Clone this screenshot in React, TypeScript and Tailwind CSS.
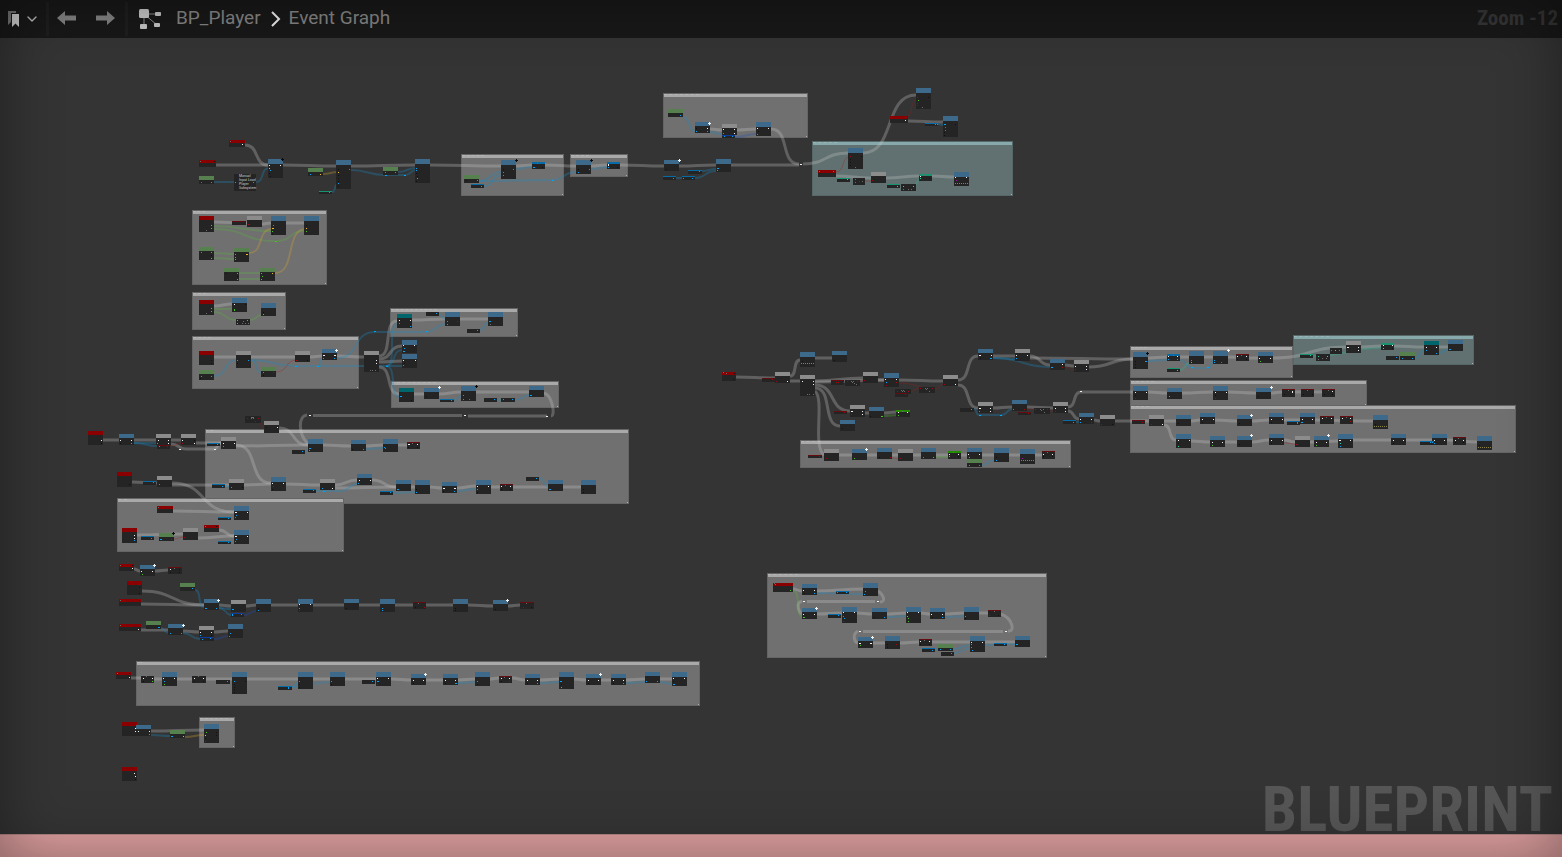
import { LuChevronDown } from "react-icons/lu";

type Kind = "b" | "r" | "g" | "n" | "t" | "c" | "d" | "s" | "m" | "l" | "k";
type NodeRow = [Kind, number, number, number, number, string?];
type WireRow = [string, number, number, number, number];
type BoxRow = [number, number, number, number, "grey" | "teal", number?];

/* Title colour of every node kind; compact kinds only carry a thin stripe. */
const TITLE: Record<Kind, string> = {
  b: "bg-[#3d698a] -right-px",
  r: "bg-[#8a0000]",
  g: "bg-[#8c8c8c]",
  n: "bg-[#57804f]",
  t: "bg-[#00666b]",
  c: "bg-[#076ca6]",
  d: "bg-[#650c10]",
  s: "bg-[#17946f]",
  m: "bg-[#0c3c9c]",
  l: "bg-[#248c00]",
  k: "bg-[#242424]",
};

const PIN: Record<string, string> = {
  w: "bg-[#f2f2f2]",
  c: "bg-[#00a6f5]",
  k: "bg-[#101010]",
  r: "bg-[#a00a0a]",
  y: "bg-[#f5bd22]",
  l: "bg-[#46c81e]",
  s: "bg-[#1fd8a8]",
  p: "bg-[#a31aa8]",
  o: "bg-[#6c6c6c]",
};

const WIRE: Record<string, [string, number]> = {
  w: ["rgba(200,200,200,0.3)", 3],
  c: ["rgba(22,140,200,0.3)", 2],
  l: ["rgba(90,180,60,0.3)", 2],
  y: ["rgba(215,165,50,0.3)", 2],
  r: ["rgba(170,25,25,0.32)", 1],
  m: ["rgba(30,80,190,0.3)", 2],
  s: ["rgba(40,190,150,0.28)", 2],
};

const BOXES: BoxRow[] = [
  [663, 93, 145, 45, "grey", 35],
  [812, 141, 201, 55, "teal", 24],
  [461, 154, 103, 42, "grey", 22],
  [570, 154, 58, 23, "grey", 18],
  [192, 210, 135, 75, "grey", 12],
  [192, 292, 94, 38, "grey", 13],
  [192, 336, 167, 53, "grey", 18],
  [390, 308, 128, 29, "grey", 46],
  [391, 381, 168, 27, "grey", 44],
  [205, 429, 424, 75, "grey", 7],
  [117, 498, 227, 54, "grey", 9],
  [136, 661, 564, 45, "grey", 5],
  [199, 717, 36, 31, "grey", 28],
  [767, 573, 280, 85, "grey", 30],
  [800, 440, 271, 28, "grey", 20],
  [1130, 346, 163, 32, "grey", 16],
  [1293, 335, 181, 30, "teal", 35],
  [1130, 380, 237, 26, "grey", 23],
  [1130, 405, 386, 48, "grey", 18],
];

const NODES: NodeRow[] = [
  // Startup chain
  ["r", 229, 140, 16, 7, "w13,4 o1,1"],
  ["r", 199, 160, 17, 7, "o1,1 k15,1"],
  ["n", 199, 176, 15, 8, "o2,6 c12,6"],
  ["k", 234, 174, 22, 17, "c1,8 c19,8"],
  ["b", 268, 159, 15, 19, "w1,6 w12,6 y1,9 c2,11 k1,14 k2,17"],
  ["n", 308, 168, 15, 8, "c2,6 y12,6"],
  ["b", 336, 160, 15, 29, "c13,9 k2,9 y2,12 k2,15 k2,18 k2,21 c2,23 k2,26"],
  ["s", 319, 191, 13, 3, "c10,1"],
  ["n", 383, 167, 15, 8, "c2,5 c12,5"],
  ["b", 415, 159, 15, 24, "c1,9 c1,11 k1,14 k2,17 l2,19 k1,22"],
  ["n", 464, 175, 15, 8, "k2,5 c13,5"],
  ["c", 471, 184, 13, 4, "c10,2"],
  ["b", 501, 160, 15, 19, "k2,9 c12,9 c2,12 c2,15"],
  ["c", 532, 162, 13, 7, "o5,1 c1,5 c2,5 k10,5"],
  ["b", 576, 160, 15, 14, "k2,9 c13,9 c2,12"],
  ["c", 607, 162, 13, 7, "w1,2 w1,3 c1,5 k10,5"],
  ["b", 664, 160, 15, 11, "k2,9"],
  ["c", 688, 170, 14, 4, "c11,1"],
  ["c", 663, 176, 13, 4, "c10,2"],
  ["c", 682, 176, 13, 4, "c1,2 c10,2"],
  ["b", 716, 159, 15, 13, "c1,9 c2,9 c1,11"],
  ["n", 668, 109, 15, 8, "c12,6"],
  ["b", 695, 122, 15, 11, "k1,6 w12,6 c1,9 c12,9"],
  ["g", 722, 124, 15, 11, "w1,5 w12,5 c1,9 w12,9"],
  ["m", 722, 135, 13, 3, "c2,1 c10,1"],
  ["b", 756, 122, 15, 14, "w1,6 w12,6 k2,9 c1,12"],
  ["b", 848, 148, 15, 21, "r2,8 k13,8 k2,11 k2,14 k2,17 o7,19"],
  ["r", 818, 170, 18, 7, "o1,1 o15,1"],
  ["s", 837, 178, 13, 4, "s10,1"],
  ["k", 853, 178, 12, 7, "o2,1 o2,4 r6,3 o9,3"],
  ["g", 871, 172, 15, 11, "r1,8"],
  ["s", 887, 184, 13, 4, "s10,2"],
  ["k", 901, 184, 15, 7, "s2,2 o7,5 s12,2 o10,5 o2,5"],
  ["s", 919, 174, 13, 7, "o5,1 w1,2 s1,4 k10,4"],
  ["b", 954, 172, 15, 14, "w1,5 w12,5 p2,8 z1,11"],
  ["b", 916, 88, 15, 21, "r1,9 k12,9 l2,12 r1,15 r1,17 o6,19"],
  ["r", 890, 116, 18, 7, "r1,1 r15,1 w15,4"],
  ["b", 943, 116, 15, 21, "c1,8 c2,8 k12,8 o2,11 o2,14 k1,16 k1,19"],
  ["c", 925, 123, 13, 3, "c10,1 c12,1"],

  // Axis input
  ["r", 199, 216, 15, 16, "l12,9 l12,12 o7,14"],
  ["d", 232, 221, 14, 4],
  ["g", 247, 216, 15, 11, "r1,8 r2,8"],
  ["b", 271, 216, 15, 19, "c2,9 y1,12 y2,12 l1,15 k1,18"],
  ["b", 304, 216, 15, 19, "k2,9 y2,12 l2,15"],
  ["n", 199, 247, 15, 13, "c2,5 l12,5 k12,8 l12,11"],
  ["n", 234, 248, 15, 14, "l1,6 y12,6 y13,6 l1,9 l1,11"],
  ["n", 224, 268, 15, 13, "k2,5 l13,5 k13,8 l13,11"],
  ["n", 260, 268, 15, 13, "l1,5 y12,5 l2,8 l1,11"],
  ["r", 199, 300, 15, 15, "l12,8 l12,11 o7,13"],
  ["b", 232, 298, 15, 14, "w2,6 k13,6 l2,11 l2,12"],
  ["b", 261, 303, 15, 13, "k2,9 l2,11"],
  ["k", 236, 319, 14, 6, "l1,1 l11,1 o6,4 o9,4 l1,4 o7,2 o12,4"],

  // Dispatch and its branches
  ["r", 199, 351, 15, 14, "k12,9 k12,12"],
  ["n", 199, 370, 15, 10, "c2,6 c12,6 k1,8"],
  ["g", 236, 351, 15, 17, "c1,9 c12,9 k1,12"],
  ["n", 261, 367, 15, 10, "c2,5 r12,5 k2,8"],
  ["g", 295, 351, 15, 11, "r1,9 r2,9 k12,9"],
  ["b", 322, 349, 15, 11, "w1,6 w2,6 w12,6 w13,6 c1,9 c12,9"],
  ["g", 364, 351, 15, 21, "w12,9 w12,12 o6,19 o8,19 o11,19"],
  ["t", 397, 314, 15, 14, "w2,6 w13,6 c2,9 c13,12"],
  ["k", 426, 312, 13, 3, "c10,1"],
  ["b", 445, 312, 15, 14, "c2,9 c2,12 r12,9"],
  ["k", 467, 329, 13, 3, "c10,1"],
  ["b", 488, 312, 15, 14, "c1,9 c2,9 o2,12"],
  ["b", 402, 340, 15, 13, "w1,5 w12,5 c2,8 c1,11 c2,11"],
  ["b", 402, 354, 15, 14, "w1,6 w13,6 k2,9 c1,11"],
  ["t", 399, 388, 15, 14, "c1,8 c2,8 k12,12"],
  ["b", 424, 388, 15, 11, "k2,8"],
  ["c", 440, 399, 14, 3, "c11,1"],
  ["b", 461, 386, 15, 15, "c2,9 c2,13 o8,13"],
  ["k", 484, 398, 13, 3, "c10,1"],
  ["k", 501, 398, 14, 3, "c2,1 c11,1"],
  ["b", 529, 386, 15, 11, "c1,9 c2,9"],

  // Movement section
  ["k", 245, 416, 16, 7, "r2,2 r13,2 o6,1 o7,1 o8,1 o6,2 o8,2 r10,5"],
  ["g", 264, 421, 15, 12, "k2,6 w13,6"],
  ["r", 88, 431, 15, 14, "w13,9 k13,12"],
  ["b", 119, 434, 15, 11, "w1,6 w12,6 k1,9 c12,9"],
  ["d", 157, 445, 13, 4, "c2,1 r10,1"],
  ["g", 156, 434, 15, 11, "w2,6 w12,6 c1,9 w12,9"],
  ["g", 181, 434, 15, 11, "w1,6 k13,6 w13,9 r1,9"],
  ["c", 207, 443, 13, 3, "c10,1"],
  ["g", 221, 437, 15, 12, "w2,6 w13,6 c2,9"],
  ["k", 292, 450, 13, 3, "c10,1"],
  ["b", 308, 439, 15, 13, "c1,9 c2,9 c1,11"],
  ["b", 351, 440, 15, 11, "k1,9 c12,9"],
  ["b", 383, 439, 15, 13, "c1,8 c2,9"],
  ["d", 407, 442, 13, 7, "w1,2 w2,2 w10,2 o5,1 k1,5 k10,5"],
  ["r", 117, 472, 15, 15, "k12,12"],
  ["c", 143, 481, 13, 4, "c10,1"],
  ["g", 157, 476, 15, 11, "c2,8"],
  ["c", 212, 484, 13, 4, "c10,2"],
  ["g", 229, 479, 15, 11, "c2,8 k13,8"],
  ["b", 271, 477, 15, 14, "w1,6 w12,6 r2,9 k1,12"],
  ["c", 303, 489, 13, 4, "c10,1"],
  ["g", 320, 479, 15, 11, "c2,9 w12,9"],
  ["b", 357, 474, 15, 11, "w2,6 w13,6 c1,9"],
  ["c", 380, 491, 13, 4, "c10,1"],
  ["b", 396, 480, 15, 11, "c1,9 c2,9"],
  ["b", 415, 480, 15, 14, "k1,9 c1,12"],
  ["b", 442, 482, 15, 11, "w1,6 w2,6 w12,6 w13,6 k1,9 c12,9"],
  ["b", 476, 480, 15, 14, "w1,6 w12,6 c1,9 k1,12"],
  ["d", 500, 484, 13, 7, "o5,1 w1,2 w10,2 k1,5 k10,5"],
  ["k", 526, 477, 13, 3, "c10,1"],
  ["b", 548, 480, 15, 11, "c1,9 c2,9"],
  ["b", 581, 480, 15, 14, "k2,9 k2,12"],
  ["r", 157, 506, 16, 7, "o1,1 k14,1"],
  ["b", 234, 506, 15, 14, "w1,6 w2,6 w13,6 c2,9 c1,11"],
  ["c", 218, 517, 13, 3, "c10,1"],
  ["r", 122, 528, 15, 15, "w12,7 w12,10 c12,12"],
  ["c", 141, 536, 13, 4, "c10,2"],
  ["n", 159, 533, 15, 8, "c1,6 c2,6 r12,6"],
  ["g", 183, 528, 15, 12, "r1,9"],
  ["r", 204, 525, 15, 7, "o1,1 k12,1"],
  ["b", 234, 530, 15, 14, "w1,6 w2,6 w13,6 c2,9 c1,11"],
  ["c", 218, 541, 13, 3, "c10,1"],

  // Short chains
  ["r", 119, 564, 15, 7, "o1,1 k13,1 w13,4"],
  ["b", 140, 565, 15, 11, "w1,6 w12,6 l2,9"],
  ["d", 168, 567, 14, 7, "o6,1 w2,2 k11,2 k2,5 k11,5"],
  ["r", 127, 581, 15, 14, "k12,6 k12,12"],
  ["r", 119, 599, 22, 7, "o1,1 k20,1"],
  ["n", 180, 583, 15, 8, "c12,5"],
  ["b", 204, 599, 15, 11, "c1,9 c2,9 c12,9"],
  ["g", 231, 600, 15, 12, "c1,9 c2,9"],
  ["m", 231, 613, 13, 4, "c1,1 c1,2 m10,1"],
  ["b", 256, 599, 15, 13, "k2,9 c2,11"],
  ["b", 298, 599, 15, 13, "w1,5 w12,5 c1,9 r1,11"],
  ["b", 344, 599, 15, 11, "k2,9"],
  ["b", 380, 599, 15, 13, "c2,9 c2,11"],
  ["d", 413, 602, 13, 7, "o5,1 k2,5 r11,5"],
  ["b", 453, 599, 15, 13, "k2,9 k2,11"],
  ["b", 493, 600, 15, 11, "k2,9"],
  ["d", 520, 602, 14, 7, "o6,1 r3,5 k11,5"],
  ["r", 119, 624, 22, 7, "o1,1 w19,5"],
  ["n", 146, 621, 15, 8, "c12,6 c13,6"],
  ["b", 168, 624, 15, 11, "c2,9 c13,9"],
  ["m", 200, 637, 14, 4, "c2,2 c10,1"],
  ["g", 199, 626, 15, 11, "w1,6 w12,6 c1,9 k12,9"],
  ["b", 228, 624, 15, 14, "c2,9 c1,12"],

  // Initialisation strip
  ["r", 116, 672, 15, 7, "o1,1 k13,1 w13,5"],
  ["k", 141, 676, 13, 7, "o5,0 w2,2 w11,2 k2,5 l11,5"],
  ["b", 162, 672, 15, 14, "w1,6 w12,6 c2,9 l2,12"],
  ["k", 192, 676, 14, 7, "o6,0 w2,2 w11,2 k2,5 k11,5"],
  ["k", 216, 680, 14, 3, "c11,1"],
  ["b", 232, 672, 15, 22, "c2,9 k13,9 k2,12 k2,15 k2,17 k2,20"],
  ["c", 278, 686, 14, 4, "c10,1 c10,2"],
  ["b", 298, 672, 15, 17, "c1,9 k1,12 k1,15"],
  ["b", 330, 672, 15, 14, "c1,9 k1,12"],
  ["k", 362, 680, 13, 3, "c10,1"],
  ["b", 376, 672, 15, 14, "w1,6 w12,6 c1,9 c2,9 r1,12"],
  ["b", 411, 674, 15, 11, "w2,6 w12,6 k2,9"],
  ["b", 443, 674, 15, 11, "w2,6 w12,6 k2,9 c12,9 c13,9"],
  ["b", 475, 672, 15, 14, "c2,9 k2,12"],
  ["d", 499, 676, 13, 7, "o5,1 w2,2 w10,2 k2,5 r10,5"],
  ["b", 525, 674, 15, 11, "w2,6 w12,6 k2,9 c12,9"],
  ["b", 559, 672, 15, 17, "c1,9 c2,9 k2,12 l2,15"],
  ["b", 586, 674, 15, 11, "w2,6 w12,6 k2,9"],
  ["b", 611, 674, 15, 11, "w2,6 w12,6 k2,9 c12,9"],
  ["b", 645, 672, 15, 11, "c1,9 c12,9"],
  ["b", 672, 672, 15, 14, "w1,6 w12,6 k1,9 c1,12 c2,12"],
  ["r", 122, 722, 15, 14, "w13,6 w13,9"],
  ["b", 136, 725, 15, 11, "w2,6 w13,6 c13,9"],
  ["n", 170, 730, 15, 8, "c1,6 c2,6 y13,6"],
  ["b", 204, 724, 15, 19, "l2,8 y1,11 k12,8 k12,11 k1,14 r1,17"],
  ["r", 122, 767, 15, 14, "w12,6 w13,9 k13,12"],

  // Damage branches
  ["r", 722, 372, 14, 9, "o1,0 o4,1 k12,1 k11,7"],
  ["d", 762, 378, 13, 4, "r10,1"],
  ["g", 775, 372, 15, 11, "r1,9 w12,9"],
  ["b", 800, 352, 15, 15, "k2,9 z1,11"],
  ["b", 832, 351, 15, 11, "k2,9"],
  ["g", 800, 375, 15, 21, "w2,6 w13,6 w13,9 o7,19 o9,19 o13,19"],
  ["d", 831, 380, 13, 5, "r5,2 r7,2 r12,2"],
  ["k", 845, 380, 15, 6, "r2,1 r12,1 o6,1 o7,2 o8,1 o9,3 o11,4"],
  ["g", 863, 372, 15, 11, "r1,8"],
  ["b", 884, 373, 15, 14, "w1,6 w12,6 c2,9 r12,9 r2,12"],
  ["k", 895, 389, 16, 5, "r2,2 r13,2 o6,1 o7,2 o8,1 o9,2"],
  ["d", 895, 393, 13, 4, "r10,1"],
  ["k", 919, 387, 16, 6, "r1,1 r13,1 o6,1 o7,2 o8,1 o10,4"],
  ["g", 943, 375, 15, 11, "r1,9 w12,9"],
  ["b", 978, 349, 15, 11, "w1,6 w2,6 w13,6 k2,9 c12,9 c13,9"],
  ["g", 1015, 349, 15, 12, "w1,6 w12,6 c1,9"],
  ["b", 1050, 359, 15, 11, "w12,5 c1,8 c2,8 r12,8"],
  ["g", 1074, 360, 15, 12, "w1,6 w12,6 r1,9 w12,9"],
  ["d", 834, 411, 13, 3, "r10,1"],
  ["g", 850, 405, 15, 12, "w1,6 w2,6 w12,6 r1,9 w12,9"],
  ["b", 869, 407, 15, 11, "k1,9 l12,9 l13,9"],
  ["l", 896, 410, 14, 7, "o6,1 w2,2 w11,2 l2,5"],
  ["b", 840, 420, 15, 11, "k2,8"],
  ["k", 960, 408, 14, 3, "c11,1"],
  ["g", 978, 402, 15, 11, "w1,6 w2,6 w12,6 c1,9 w12,9"],
  ["b", 1012, 400, 15, 11, "c1,9 r12,9"],
  ["d", 1018, 412, 13, 3, "r10,1"],
  ["k", 1034, 408, 16, 6, "r1,1 r13,1 o6,1 o7,2 o9,1 o10,4"],
  ["g", 1053, 402, 15, 11, "w2,6 w12,6 r2,9 w12,9"],
  ["c", 1063, 420, 13, 4, "c10,2"],
  ["b", 1079, 413, 15, 11, "w1,6 w12,6 c1,9 r12,9"],
  ["g", 1100, 415, 15, 11, "r1,9 k12,9"],
  ["d", 808, 455, 14, 3, "r11,1"],
  ["g", 824, 449, 15, 12, "r2,9"],
  ["b", 852, 449, 15, 11, "l2,9"],
  ["b", 877, 448, 15, 11, "k2,9 r13,9"],
  ["g", 898, 449, 15, 12, "r2,9"],
  ["b", 921, 448, 15, 11, "c2,9 l12,9"],
  ["l", 948, 451, 13, 8, "o5,1 w1,3 w10,3 l1,5 k10,5"],
  ["b", 967, 448, 15, 11, "w1,6 w12,6 c2,9"],
  ["n", 967, 459, 15, 8, "c2,6 c12,6"],
  ["b", 994, 448, 15, 14, "k2,9 c2,12"],
  ["b", 1020, 449, 15, 15, "p2,9 z1,11"],
  ["d", 1042, 451, 13, 8, "o5,1 w1,3 w10,3 k1,5 k10,5"],

  // Combat lanes
  ["b", 1133, 352, 15, 17, "k2,9 c12,9 c13,9 k2,12 k2,15"],
  ["c", 1167, 354, 13, 7, "o6,1 w1,2 w10,2 c1,5 c10,5"],
  ["s", 1167, 368, 13, 4, "s10,2"],
  ["b", 1189, 351, 15, 13, "c2,9 s2,11"],
  ["b", 1213, 351, 15, 13, "c1,9 c1,11 o8,11"],
  ["d", 1236, 354, 13, 7, "o5,1 w1,2 w10,2 k1,5 k10,5"],
  ["b", 1258, 352, 15, 11, "w1,6 w12,6 l2,9"],
  ["s", 1300, 354, 13, 4, "s10,1"],
  ["k", 1316, 354, 14, 7, "s2,2 o6,4 s11,2 o10,4 o2,5"],
  ["k", 1330, 348, 12, 6, "o1,2 s5,2 o9,2"],
  ["g", 1346, 341, 15, 12, "w1,6 w2,6 w12,6 r1,9 w12,9"],
  ["s", 1381, 343, 13, 7, "o6,1 w2,2 w11,2 s2,5 k11,5"],
  ["k", 1386, 356, 13, 3, "c10,1"],
  ["n", 1400, 352, 15, 8, "c2,6 c12,6"],
  ["t", 1424, 341, 15, 14, "w2,6 w12,6 c2,9 c12,12"],
  ["b", 1448, 340, 15, 11, "c1,9 c2,9"],
  ["b", 1133, 386, 15, 14, "w2,6 w13,6 k2,9 r2,12"],
  ["b", 1167, 388, 15, 11, "l2,8"],
  ["b", 1213, 386, 15, 14, "w2,6 w13,6 k2,9 r2,12"],
  ["b", 1256, 388, 15, 11, "k2,8"],
  ["d", 1282, 389, 13, 8, "o6,1 w10,2 k2,5 w10,3"],
  ["d", 1301, 389, 13, 8, "o6,1 k2,5 k11,5"],
  ["d", 1322, 389, 13, 8, "o6,1 w10,2 k2,5 k10,5"],
  ["d", 1132, 420, 13, 4, "r10,2"],
  ["g", 1149, 415, 15, 11, "r2,9 w13,9"],
  ["b", 1176, 415, 15, 11, "k2,8"],
  ["b", 1200, 413, 15, 11, "w2,6 w13,6 k2,9"],
  ["b", 1237, 415, 15, 11, "k2,8"],
  ["b", 1269, 413, 15, 11, "w2,6 w13,6 k2,9"],
  ["b", 1300, 413, 15, 11, "w2,6 w12,6 c1,9 c2,9"],
  ["c", 1287, 421, 13, 4, "c10,1 c10,2"],
  ["d", 1320, 416, 14, 8, "o6,1 w2,2 w11,2 r11,5"],
  ["d", 1340, 416, 13, 8, "o6,1 w2,2 w10,2 r10,5"],
  ["b", 1373, 415, 15, 14, "k2,9 z1,11"],
  ["b", 1176, 434, 15, 14, "w2,6 w13,6 k2,9 s2,12"],
  ["b", 1210, 436, 15, 11, "w2,6 w12,6 l2,9"],
  ["b", 1237, 436, 15, 11, "k2,8"],
  ["b", 1269, 434, 15, 11, "w2,6 w13,6 k2,9 r12,9"],
  ["g", 1295, 436, 15, 11, "r1,8 r2,8"],
  ["b", 1314, 436, 15, 11, "w2,6 w12,6 l2,9"],
  ["b", 1338, 434, 15, 14, "w1,6 w2,6 w12,6 s2,9 c2,12"],
  ["b", 1391, 434, 15, 11, "w2,6 w12,6 k2,9"],
  ["b", 1432, 434, 15, 11, "w2,6 w12,6 c2,9"],
  ["c", 1420, 441, 14, 4, "c10,1 c12,1"],
  ["d", 1453, 437, 13, 8, "o5,1 w2,3 w10,3 k2,5 k10,5"],
  ["b", 1477, 436, 15, 14, "k2,9 z1,11"],

  // Respawn section
  ["r", 773, 583, 20, 9, "o1,0 o2,1 k18,1 l17,7"],
  ["b", 802, 584, 15, 11, "w1,6 w12,6 k2,9 c12,9"],
  ["c", 836, 591, 13, 3, "c1,1 c10,1"],
  ["b", 863, 583, 15, 13, "c2,8 c1,11"],
  ["b", 802, 608, 15, 11, "w1,6 w12,6 l1,9 l2,9"],
  ["c", 828, 614, 13, 4, "c10,1"],
  ["b", 842, 607, 15, 16, "w1,5 w12,5 c1,9 c2,11 r1,14"],
  ["b", 872, 608, 15, 11, "k2,9 c12,9"],
  ["b", 906, 607, 15, 16, "w1,5 w12,5 s1,9 l2,11 l2,14"],
  ["b", 930, 608, 15, 11, "w1,6 w12,6 k2,9 c12,9"],
  ["b", 964, 607, 15, 13, "c1,9 k1,11"],
  ["d", 988, 610, 13, 7, "o6,1 r1,5 k10,5"],
  ["b", 858, 637, 15, 11, "w1,6 w2,6 w12,6 w13,6 l2,8"],
  ["b", 885, 636, 15, 13, "k2,8 r11,8 k2,11"],
  ["d", 919, 639, 13, 7, "o5,1 w1,2 w10,2 k1,5 k10,5"],
  ["c", 922, 648, 13, 4, "c10,2"],
  ["n", 938, 644, 15, 7, "c2,5 c12,5"],
  ["k", 941, 652, 13, 3, "c10,1"],
  ["b", 970, 636, 15, 16, "w1,6 w12,6 c1,8 c1,11 c2,14"],
  ["c", 994, 643, 13, 3, "c10,1"],
  ["b", 1015, 636, 15, 11, "c1,8 c2,8"],
];

const WIRES: WireRow[] = [
  ["w", 245, 145, 268, 165], ["w", 216, 165, 268, 165], ["w", 283, 165, 336, 166],
  ["w", 351, 166, 415, 165], ["w", 430, 165, 501, 166], ["w", 516, 166, 532, 165],
  ["w", 545, 165, 576, 166], ["w", 591, 166, 607, 165], ["w", 620, 165, 664, 166],
  ["w", 679, 166, 716, 165], ["w", 731, 165, 799, 165], ["w", 771, 129, 799, 164],
  ["w", 803, 164, 848, 153], ["w", 863, 153, 916, 95], ["w", 908, 121, 943, 122],
  ["w", 836, 176, 871, 178], ["w", 886, 178, 919, 176], ["w", 932, 176, 954, 177],
  ["w", 710, 129, 722, 130], ["w", 737, 130, 756, 129], ["r", 905, 118, 918, 99],
  ["r", 836, 172, 850, 157], ["r", 865, 181, 871, 181], ["s", 913, 186, 921, 179],
  ["c", 683, 117, 695, 131], ["c", 710, 132, 722, 134], ["m", 735, 137, 757, 134],
  ["c", 676, 178, 682, 178], ["c", 695, 178, 716, 171], ["c", 702, 171, 716, 169],
  ["c", 591, 169, 607, 167], ["c", 938, 124, 943, 125], ["c", 214, 182, 234, 182],
  ["c", 256, 182, 269, 168], ["y", 323, 174, 338, 172], ["c", 332, 192, 338, 184],
  ["c", 351, 170, 385, 175], ["c", 385, 175, 405, 175], ["c", 398, 172, 416, 168],
  ["c", 405, 175, 416, 170], ["c", 479, 181, 502, 172], ["c", 479, 181, 552, 180],
  ["c", 484, 186, 502, 175], ["c", 552, 180, 576, 172], ["c", 514, 169, 532, 167],
  ["w", 214, 222, 247, 223], ["w", 262, 224, 271, 223], ["w", 286, 223, 304, 223],
  ["l", 214, 226, 271, 231], ["l", 214, 229, 275, 241], ["l", 277, 241, 304, 231],
  ["y", 249, 253, 272, 229], ["y", 275, 273, 306, 229], ["l", 214, 253, 235, 254],
  ["l", 214, 258, 235, 259], ["l", 239, 273, 260, 273], ["l", 239, 279, 260, 279],
  ["w", 214, 306, 232, 304], ["l", 214, 309, 232, 309], ["l", 214, 312, 236, 320],
  ["l", 250, 320, 262, 315],
  ["w", 214, 357, 236, 357], ["w", 251, 357, 295, 357], ["w", 310, 357, 322, 356],
  ["w", 337, 356, 364, 357], ["w", 379, 356, 397, 321], ["w", 379, 359, 402, 346],
  ["w", 379, 362, 402, 361], ["w", 379, 367, 399, 394], ["w", 412, 320, 445, 319],
  ["w", 460, 319, 488, 319], ["w", 414, 394, 424, 394], ["w", 439, 394, 461, 392],
  ["w", 476, 392, 529, 392], ["c", 214, 376, 237, 360], ["c", 251, 360, 262, 373],
  ["c", 251, 360, 295, 366], ["c", 295, 366, 386, 366], ["c", 318, 366, 323, 358],
  ["c", 337, 358, 375, 332], ["c", 375, 332, 426, 332], ["c", 426, 332, 446, 324],
  ["r", 276, 372, 297, 360], ["c", 386, 366, 402, 350], ["c", 386, 366, 402, 366],
  ["c", 386, 366, 398, 324], ["c", 386, 366, 400, 397], ["c", 438, 314, 446, 319],
  ["c", 480, 330, 489, 322], ["c", 454, 400, 462, 396], ["c", 497, 400, 501, 400],
  ["c", 515, 400, 530, 395],
  ["w", 103, 440, 119, 440], ["w", 134, 440, 156, 440], ["w", 171, 440, 181, 440],
  ["w", 196, 443, 221, 443], ["w", 171, 444, 186, 449], ["w", 186, 449, 214, 449],
  ["w", 214, 449, 221, 443], ["w", 236, 446, 308, 445], ["w", 236, 445, 271, 483],
  ["w", 279, 428, 308, 445], ["w", 323, 445, 351, 446], ["w", 366, 446, 383, 445],
  ["w", 398, 445, 407, 445], ["w", 132, 482, 157, 483], ["w", 172, 483, 234, 512],
  ["w", 172, 485, 229, 485], ["w", 244, 485, 271, 484], ["w", 286, 484, 320, 485],
  ["w", 335, 485, 357, 480], ["w", 372, 480, 396, 487], ["w", 335, 488, 396, 487],
  ["w", 411, 487, 415, 487], ["w", 430, 487, 442, 488], ["w", 457, 488, 476, 486],
  ["w", 491, 487, 500, 487], ["w", 513, 487, 548, 487], ["w", 563, 487, 581, 487],
  ["w", 172, 511, 234, 512], ["w", 137, 535, 183, 534], ["w", 198, 538, 234, 536],
  ["w", 219, 530, 234, 536], ["c", 134, 443, 157, 446], ["c", 134, 443, 156, 443],
  ["r", 171, 446, 182, 443], ["r", 256, 419, 265, 428], ["c", 366, 449, 383, 448],
  ["c", 225, 486, 230, 487], ["c", 316, 491, 341, 491], ["c", 341, 491, 357, 484],
  ["c", 393, 493, 415, 492], ["c", 457, 491, 476, 489], ["c", 539, 478, 549, 487],
  ["c", 305, 451, 309, 450], ["r", 174, 539, 184, 537],
  ["w", 134, 569, 140, 571], ["w", 155, 571, 168, 570], ["w", 142, 591, 204, 605],
  ["w", 141, 604, 204, 605], ["w", 219, 605, 231, 606], ["w", 246, 606, 256, 605],
  ["w", 271, 605, 298, 605], ["w", 313, 605, 344, 605], ["w", 359, 605, 380, 605],
  ["w", 395, 605, 413, 605], ["w", 426, 605, 453, 605], ["w", 468, 605, 493, 606],
  ["w", 508, 606, 520, 605], ["w", 141, 630, 168, 630], ["w", 183, 631, 199, 632],
  ["w", 214, 632, 228, 631], ["c", 195, 590, 204, 607], ["c", 219, 608, 232, 615],
  ["c", 219, 608, 231, 609], ["m", 244, 615, 257, 611], ["c", 160, 628, 169, 633],
  ["c", 183, 633, 200, 639], ["m", 214, 639, 229, 636],
  ["w", 131, 678, 141, 678], ["w", 154, 679, 162, 679], ["w", 177, 679, 192, 679],
  ["w", 206, 679, 232, 679], ["w", 247, 679, 298, 679], ["w", 313, 679, 330, 679],
  ["w", 345, 679, 376, 679], ["w", 391, 679, 411, 680], ["w", 426, 680, 443, 680],
  ["w", 458, 680, 475, 679], ["w", 490, 679, 499, 678], ["w", 512, 678, 525, 680],
  ["w", 540, 680, 559, 679], ["w", 574, 679, 586, 680], ["w", 601, 680, 611, 680],
  ["w", 626, 680, 645, 679], ["w", 660, 679, 672, 679], ["c", 292, 687, 299, 682],
  ["c", 292, 687, 331, 682], ["c", 458, 683, 476, 682], ["c", 540, 683, 560, 682],
  ["c", 626, 683, 646, 682], ["c", 660, 682, 673, 684], ["w", 151, 731, 204, 730],
  ["c", 151, 735, 170, 736], ["y", 185, 737, 204, 735],
  ["w", 736, 377, 775, 378], ["w", 790, 376, 800, 360], ["w", 815, 358, 832, 358],
  ["w", 790, 381, 800, 381], ["w", 815, 381, 863, 378], ["w", 878, 380, 884, 380],
  ["w", 899, 380, 943, 381], ["w", 815, 382, 884, 380], ["w", 958, 380, 978, 356],
  ["w", 958, 385, 978, 408], ["w", 993, 356, 1015, 356], ["w", 1030, 356, 1050, 365],
  ["w", 1030, 358, 1133, 359], ["w", 1065, 365, 1074, 366], ["w", 1089, 367, 1133, 359],
  ["w", 815, 385, 850, 411], ["w", 815, 388, 840, 426], ["w", 865, 413, 869, 413],
  ["w", 884, 413, 896, 412], ["w", 993, 408, 1012, 407], ["w", 1027, 407, 1053, 408],
  ["w", 1068, 407, 1081, 392], ["w", 1081, 392, 1133, 392], ["w", 1068, 411, 1079, 419],
  ["w", 1094, 420, 1100, 421], ["w", 1115, 421, 1149, 421], ["c", 993, 358, 1016, 359],
  ["c", 993, 358, 1051, 367], ["c", 974, 409, 979, 415], ["c", 979, 415, 1001, 415],
  ["c", 1001, 415, 1013, 409], ["c", 1076, 422, 1080, 422], ["l", 884, 416, 897, 415],
  ["r", 899, 383, 932, 388], ["r", 935, 389, 944, 384], ["r", 911, 391, 920, 388],
  ["r", 860, 381, 864, 381], ["r", 1027, 409, 1053, 411], ["r", 1065, 367, 1075, 370],
  ["w", 839, 455, 877, 455], ["w", 892, 455, 921, 455], ["w", 936, 455, 967, 455],
  ["w", 982, 455, 1020, 455], ["w", 1035, 455, 1042, 455], ["l", 936, 457, 948, 457],
  ["c", 982, 465, 995, 460], ["r", 892, 458, 899, 459],
  ["w", 1148, 358, 1167, 357], ["w", 1180, 357, 1213, 357], ["w", 1228, 357, 1258, 358],
  ["w", 1273, 358, 1346, 347], ["w", 1361, 347, 1381, 346], ["w", 1394, 346, 1424, 347],
  ["w", 1439, 347, 1448, 347], ["c", 1148, 361, 1167, 360], ["c", 1180, 360, 1191, 367],
  ["c", 1191, 368, 1208, 368], ["c", 1208, 368, 1214, 361], ["s", 1180, 370, 1190, 363],
  ["s", 1313, 356, 1382, 348], ["c", 1415, 358, 1425, 350], ["c", 1439, 353, 1449, 349],
  ["w", 1148, 392, 1167, 393], ["w", 1182, 393, 1213, 392], ["w", 1228, 392, 1256, 393],
  ["w", 1271, 393, 1282, 392], ["w", 1295, 392, 1322, 392], ["w", 1164, 421, 1176, 421],
  ["w", 1191, 421, 1200, 420], ["w", 1215, 420, 1237, 421], ["w", 1252, 421, 1269, 420],
  ["w", 1284, 420, 1300, 420], ["w", 1315, 420, 1373, 421], ["w", 1164, 425, 1176, 440],
  ["w", 1191, 441, 1210, 442], ["w", 1225, 442, 1237, 442], ["w", 1252, 442, 1269, 440],
  ["w", 1284, 440, 1295, 442], ["w", 1310, 442, 1338, 441], ["w", 1353, 440, 1391, 440],
  ["w", 1406, 440, 1432, 440], ["w", 1447, 440, 1477, 442], ["r", 1284, 443, 1296, 444],
  ["w", 793, 589, 802, 591], ["w", 817, 591, 863, 589], ["w", 817, 614, 842, 613],
  ["w", 857, 613, 872, 614], ["w", 887, 614, 906, 613], ["w", 921, 613, 930, 614],
  ["w", 945, 614, 964, 613], ["w", 979, 613, 988, 613], ["w", 873, 643, 885, 643],
  ["w", 900, 643, 919, 642], ["w", 932, 642, 970, 642], ["w", 985, 642, 1015, 642],
  ["c", 817, 593, 864, 594], ["c", 887, 617, 907, 616], ["c", 945, 617, 965, 616],
  ["l", 793, 591, 803, 617], ["c", 953, 649, 971, 645], ["c", 954, 653, 971, 648],
  ["c", 985, 645, 1016, 644], ["c", 935, 650, 938, 649],
];

/* Loops that run back to an earlier node by way of reroute points. */
const LOOPS = [
  "M544 393 C552 395 556 416 551 416",
  "M547 416 H468",
  "M462 415.500 H313",
  "M307 415 C298 416 298 434 308 444",
  "M815 391 C825 400 812 446 824 455",
  "M878 591 C884 595 886 602 880 602",
  "M875 601.500 H807",
  "M802 601 C795 603 799 612 802 614",
  "M1001 614 C1012 618 1016 632 1008 631",
  "M1003 631.500 H863",
  "M858 631 C852 634 854 642 858 643",
];

const REROUTES: [string, number, number][] = [
  ["w", 800, 164], ["w", 309, 415], ["w", 464, 415], ["w", 546, 416], ["w", 179, 449],
  ["w", 214, 449], ["w", 803, 601], ["w", 877, 601], ["w", 859, 631], ["w", 1005, 631],
  ["w", 1080, 391], ["c", 385, 175], ["c", 404, 175], ["c", 552, 180], ["c", 374, 331],
  ["c", 426, 331], ["c", 295, 366], ["c", 317, 366], ["c", 386, 366], ["c", 979, 415],
  ["c", 1000, 415], ["c", 1191, 367], ["c", 1207, 367], ["l", 275, 241], ["c", 323, 491],
];

const BADGES: [number, number, boolean][] = [
  [282, 159, true], [516, 160, true], [591, 160, true], [679, 160, false], [709, 123, false],
  [336, 350, false], [439, 387, false], [476, 386, true], [173, 533, true], [154, 565, false],
  [218, 600, false], [183, 625, false], [507, 600, false], [425, 674, false], [600, 674, false],
  [866, 449, false], [1147, 353, true], [1228, 350, false], [1271, 387, false], [1251, 415, false],
  [1251, 435, false], [1328, 435, false], [816, 608, false], [872, 637, false],
];

function wirePath(x1: number, y1: number, x2: number, y2: number) {
  const reach = Math.abs(x2 - x1) * 0.5 + Math.min(Math.abs(y2 - y1) * 0.15, 6);
  return `M${x1} ${y1} C${x1 + reach} ${y1} ${x2 - reach} ${y2} ${x2} ${y2}`;
}

function CommentBox({ row: [x, y, w, h, tone, label = 0] }: { row: BoxRow }) {
  const teal = tone === "teal";
  return (
    <div
      className={`absolute border ${teal ? "border-[#566768] bg-[#617070]" : "border-[#656565] bg-[#707070]"}`}
      style={{ left: x, top: y, width: w, height: h }}
    >
      <div className={`h-[3px] ${teal ? "bg-[#87a9ab]" : "bg-[#a9a9a9]"}`}>
        <div className="border-t border-dashed border-white/15" style={{ width: label }} />
      </div>
      <div className="absolute right-0 bottom-0 size-px bg-[#b0b0b0]" />
    </div>
  );
}

function GraphNode({ row: [kind, x, y, w, h, pins] }: { row: NodeRow }) {
  const thin = "cdsml".includes(kind);
  const title = thin
    ? h > 5 && kind !== "d"
      ? 2
      : 1
    : h < 10 && kind === "r"
      ? 3
      : h < 13 || kind !== "b"
        ? 4
        : 5;
  return (
    <div className="absolute bg-[#242424]" style={{ left: x, top: y, width: w, height: h }}>
      <div className={`absolute top-0 left-0 right-0 ${TITLE[kind]}`} style={{ height: title }} />
      {(pins ? pins.split(" ") : []).map((pin) => {
        const [px, py] = pin.slice(1).split(",").map(Number);
        return pin[0] === "z" ? (
          <div
            key={pin}
            className="absolute border-t border-dotted border-[#8a8344]"
            style={{ left: px, top: py, width: w - 2 }}
          />
        ) : (
          <div key={pin} className={`absolute size-px ${PIN[pin[0]] ?? PIN.c}`} style={{ left: px, top: py }} />
        );
      })}
    </div>
  );
}

function Graph() {
  return (
    <div className="absolute left-0 -top-[38px]">
      {BOXES.map((row) => (
        <CommentBox key={`${row[0]}-${row[1]}`} row={row} />
      ))}
      <svg className="absolute left-0 top-0 overflow-visible" width="1" height="1" fill="none" aria-hidden="true">
        {WIRES.map(([tone, x1, y1, x2, y2], i) => (
          <path key={i} d={wirePath(x1, y1, x2, y2)} stroke={WIRE[tone][0]} strokeWidth={WIRE[tone][1]} />
        ))}
        {LOOPS.map((d) => (
          <path key={d} d={d} stroke={WIRE.w[0]} strokeWidth={3} />
        ))}
      </svg>
      {NODES.map((row, i) => (
        <GraphNode key={i} row={row} />
      ))}
      <div className="absolute left-[239px] top-[174px] font-['Roboto_Condensed',Roboto,sans-serif] text-[4px] leading-[4px] text-[#c4c4c4]">
        Manual
        <br />
        Input Load
        <br />
        Player
        <br />
        Subsystem
      </div>
      {REROUTES.map(([tone, x, y]) => (
        <div key={`${x}-${y}`} className={`absolute h-px w-[2px] ${PIN[tone]}`} style={{ left: x, top: y }} />
      ))}
      <svg className="absolute left-0 top-0 overflow-visible" width="1" height="1" aria-hidden="true">
        {BADGES.map(([x, y, dark]) => (
          <path
            key={`${x}-${y}`}
            d={`M${x - 1} ${y} h3 v1 h-3z M${x} ${y - 1} h1 v3 h-1z`}
            fill={dark ? "#0a0a0a" : "#f4f4f4"}
          />
        ))}
      </svg>
    </div>
  );
}

export default function App() {
  return (
    <div className="relative flex h-screen flex-col overflow-hidden bg-[#343434] font-[Roboto,sans-serif]">
      <header className="flex h-[38px] shrink-0 items-center bg-[#181818] text-[19px] leading-6 text-[#838383]">
        <button type="button" aria-label="Bookmarks" className="flex h-full w-[46px] items-center gap-1 pl-2">
          <svg width="12" height="16" viewBox="0 0 12 16" aria-hidden="true">
            <path d="M0 0h8v2H3v9l-3 3z" fill="#757575" />
            <path d="M4 3h7v13l-3.500-3.500L4 16z" fill="#cdcdcd" />
          </svg>
          <LuChevronDown size={16} strokeWidth={2} className="shrink-0 text-[#bdbdbd]" />
        </button>
        <span className="h-[34px] w-[3px] bg-[#1e1e1e]" />
        <nav aria-label="History" className="flex w-[76px] items-center gap-5 pb-0.5 pl-2">
          <button type="button" aria-label="Back">
            <svg width="19" height="16" viewBox="0 0 19 16" fill="#828282" aria-hidden="true">
              <path d="M0 8l8-7v4.500h11v5H8V15z" />
            </svg>
          </button>
          <button type="button" aria-label="Forward">
            <svg width="19" height="16" viewBox="0 0 19 16" fill="#828282" aria-hidden="true">
              <path d="M19 8l-8-7v4.500H0v5h11V15z" />
            </svg>
          </button>
        </nav>
        <span className="h-[34px] w-[3px] bg-[#1e1e1e]" />
        <nav aria-label="Breadcrumb" className="flex items-center pb-0.5 pl-[11px]">
          <svg className="mt-0.5" width="23" height="20" viewBox="0 0 23 20" aria-hidden="true">
            <path d="M5 5h14M5 5v12M5 5l13 11" stroke="#8a8a8a" strokeWidth="1" fill="none" />
            <rect x="0" y="0" width="10" height="9" rx="1.500" fill="#c4c4c4" />
            <rect x="16" y="3" width="6" height="4" rx="1" fill="#c4c4c4" />
            <rect x="1" y="15" width="7" height="5" rx="1" fill="#c4c4c4" />
            <rect x="15" y="14" width="6" height="4" rx="1" fill="#c4c4c4" />
          </svg>
          <a href="#player" className="pl-3.5">
            BP_Player
          </a>
          <svg className="mt-0.5 mr-2 ml-2.5" width="10" height="16" viewBox="0 0 10 16" aria-hidden="true">
            <path d="M1 1l7 7-7 7" fill="none" stroke="#ececec" strokeWidth="2" />
          </svg>
          <a href="#event-graph">Event Graph</a>
        </nav>
        <span className="ml-auto pr-1 pb-0.5 font-['Roboto_Condensed','Liberation_Sans_Narrow',Roboto,sans-serif] text-[21px] font-bold text-[#353535]">
          Zoom -12
        </span>
      </header>
      <main className="relative min-h-0 flex-1 overflow-hidden">
        <Graph />
      </main>
      <footer className="h-[23px] shrink-0 border-t border-[#b58787] bg-[#e0a0a0]" />
      <div className="pointer-events-none absolute right-[9px] bottom-[9px] font-['Roboto_Condensed','Liberation_Sans_Narrow',Roboto,sans-serif] text-[63px] leading-[76px] font-bold text-[#565656]">
        BLUEPRINT
      </div>
      <div className="pointer-events-none absolute inset-0 shadow-[inset_0_0_60px_rgba(0,0,0,0.4)]" />
    </div>
  );
}
